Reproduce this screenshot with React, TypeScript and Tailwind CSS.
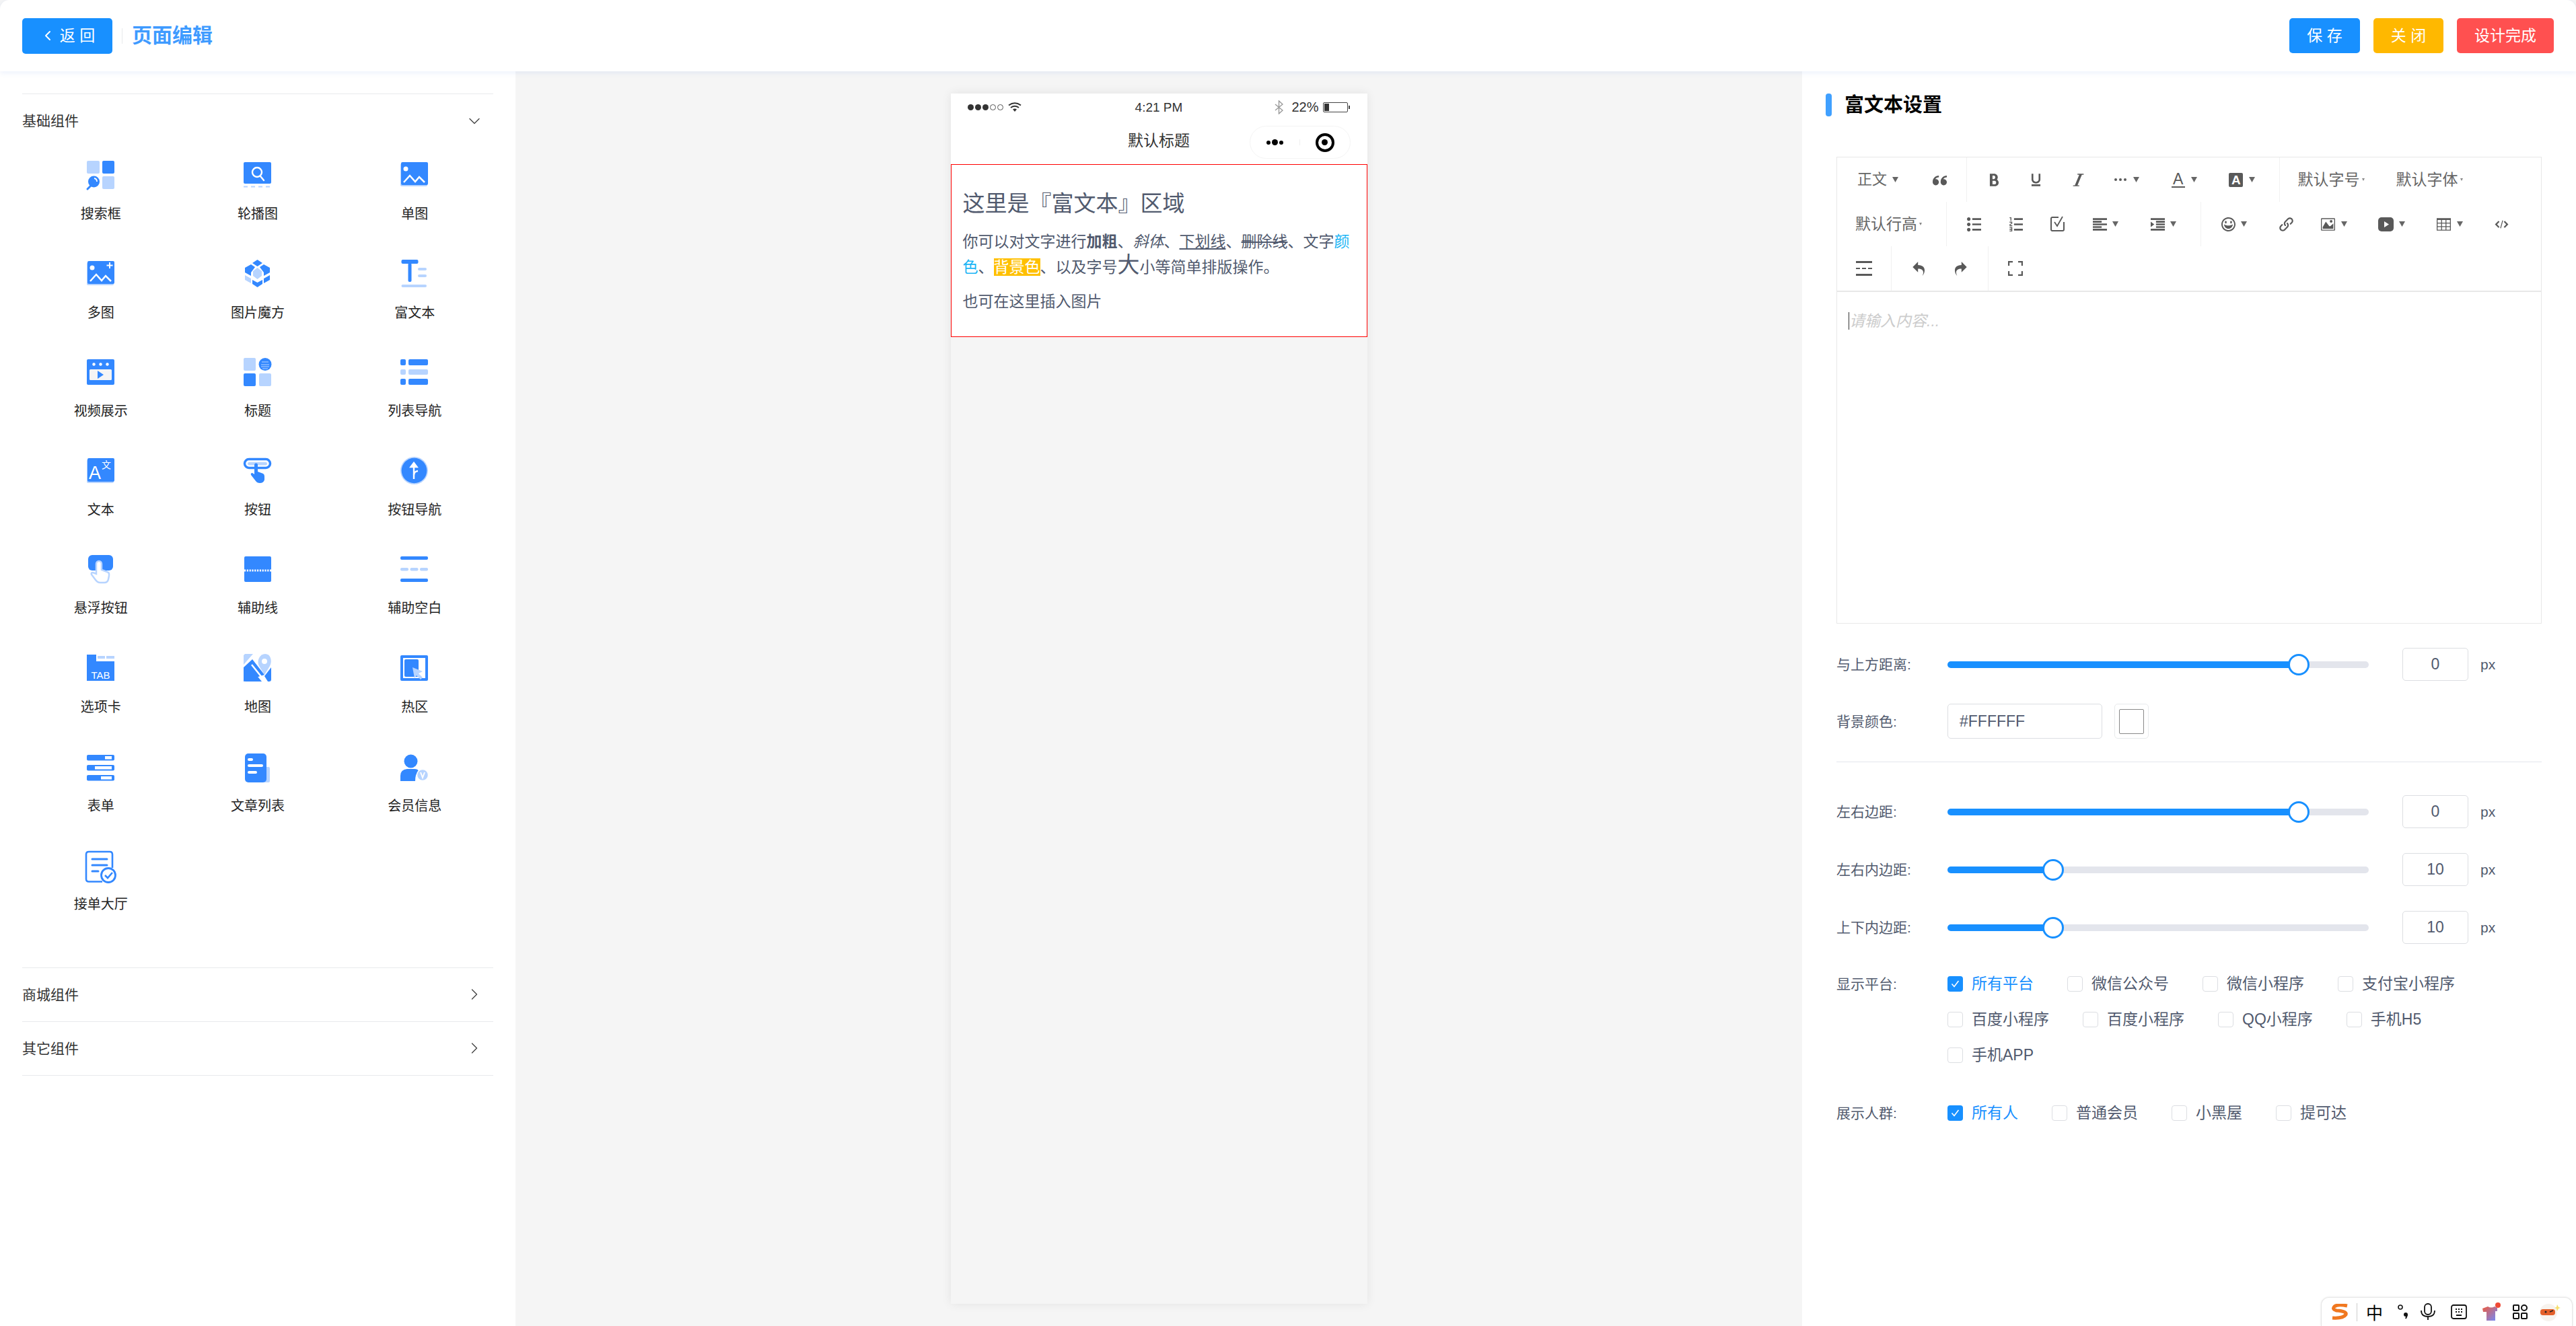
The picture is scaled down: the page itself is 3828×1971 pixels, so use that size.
import type { ReactNode } from "react";
import { ChevronDown, ChevronLeft, ChevronRight } from "lucide-react";
import {
  ImBold,
  ImEmbed2,
  ImHappy,
  ImImage,
  ImIndentIncrease,
  ImItalic,
  ImLink,
  ImList2,
  ImListNumbered,
  ImParagraphLeft,
  ImQuotesLeft,
  ImRedo2,
  ImTable2,
  ImUnderline,
  ImUndo2,
} from "react-icons/im";

const D = "#3388ff";
const L = "#b7d4ff";

function Ico({ children }: { children: ReactNode }) {
  return (
    <svg width="42" height="46" viewBox="0 0 42 46" className="overflow-visible">
      {children}
    </svg>
  );
}

const icons: { label: string; icon: ReactNode }[] = [
  {
    label: "搜索框",
    icon: (
      <Ico>
        <rect x="0" y="0" width="19" height="19" rx="2" fill={L} />
        <rect x="23" y="0" width="18" height="19" rx="2" fill={D} />
        <rect x="23" y="23" width="18" height="19" rx="2" fill={L} />
        <circle cx="10.5" cy="31" r="8.5" fill={D} />
        <path d="M6 37 L1 42" stroke={D} strokeWidth="3" strokeLinecap="round" />
        <path d="M11 26 a5 5 0 0 1 4 5" stroke="#fff" strokeWidth="1.8" fill="none" />
      </Ico>
    ),
  },
  {
    label: "轮播图",
    icon: (
      <Ico>
        <rect x="0" y="2" width="41" height="32" rx="2" fill={D} />
        <circle cx="20" cy="17" r="7" stroke="#fff" strokeWidth="2.4" fill="none" />
        <path d="M25 23 L30 29" stroke="#fff" strokeWidth="2.4" strokeLinecap="round" />
        <path d="M0 38.5 H41" stroke={L} strokeWidth="2" strokeDasharray="6 5" />
      </Ico>
    ),
  },
  {
    label: "单图",
    icon: (
      <Ico>
        <rect x="0" y="4" width="40" height="34" rx="2" fill={L} />
        <rect x="1" y="2" width="40" height="34" rx="2" fill={D} />
        <circle cx="8" cy="12" r="3.5" fill="#fff" />
        <path d="M5 32 L14 22 L22 31 L28 24 L36 32" stroke="#fff" strokeWidth="2.5" fill="none" />
      </Ico>
    ),
  },
  {
    label: "多图",
    icon: (
      <Ico>
        <rect x="0" y="4" width="40" height="34" rx="2" fill={L} />
        <rect x="1" y="2" width="40" height="34" rx="2" fill={D} />
        <circle cx="8" cy="12" r="3.5" fill="#fff" />
        <path d="M5 32 L14 22 L22 31 L28 24 L36 32" stroke="#fff" strokeWidth="2.5" fill="none" />
        <path d="M34 4 V13 M29.5 8.5 H38.5" stroke="#fff" strokeWidth="2" />
      </Ico>
    ),
  },
  {
    label: "图片魔方",
    icon: (
      <Ico>
        <path d="M20.5 0 L28 5 L20.5 10 L13 5 Z" fill={D} />
        <path d="M11 7 L17 11 L11 19 L11 24 L2 19 L2 12 Z" fill={D} />
        <path d="M30 7 L39 12 L39 19 L30 24 L30 19 L24 11 Z" fill={D} />
        <path d="M20.5 12 L27 17 L27 24 L20.5 29 L14 24 L14 17 Z" fill={L} />
        <path d="M2 23 L11 28 L11 35 L2 30 Z" fill={L} />
        <path d="M39 23 L30 28 L30 35 L39 30 Z" fill={D} />
        <path d="M13 30 L20.5 34 L28 30 L28 36 L20.5 41 L13 36 Z" fill={D} />
      </Ico>
    ),
  },
  {
    label: "富文本",
    icon: (
      <Ico>
        <rect x="1.5" y="0" width="25" height="6" rx="2" fill={D} />
        <rect x="11.5" y="5" width="5" height="28" rx="2" fill={D} />
        <rect x="26" y="12" width="13" height="4" rx="2" fill={L} />
        <rect x="26" y="22" width="13" height="4" rx="2" fill={L} />
        <rect x="1.5" y="37" width="37.5" height="4" rx="2" fill={L} />
      </Ico>
    ),
  },
  {
    label: "视频展示",
    icon: (
      <Ico>
        <rect x="0" y="2" width="41" height="38" rx="2" fill={D} />
        <circle cx="10.5" cy="9.5" r="2.2" fill="#fff" />
        <circle cx="20.5" cy="9.5" r="2.2" fill="#fff" />
        <circle cx="30.5" cy="9.5" r="2.2" fill="#fff" />
        <rect x="4" y="17" width="33" height="16" rx="1.5" fill="#f5f5f5" />
        <path d="M16 19 L25 25 L16 31 Z" fill={D} />
      </Ico>
    ),
  },
  {
    label: "标题",
    icon: (
      <Ico>
        <rect x="0" y="0" width="18" height="19" rx="2" fill={L} />
        <circle cx="32" cy="9.5" r="9.5" fill={D} />
        <path d="M27 6 H37 M26 10 H38 M26 13 H38 M28 16 H36" stroke={L} strokeWidth="1" />
        <rect x="0" y="23" width="18" height="19" rx="2" fill={D} />
        <rect x="23" y="23" width="18" height="19" rx="2" fill={L} />
      </Ico>
    ),
  },
  {
    label: "列表导航",
    icon: (
      <Ico>
        <rect x="0" y="2" width="8" height="9" rx="2" fill={D} />
        <rect x="12" y="2" width="29" height="9" rx="2" fill={D} />
        <rect x="0" y="17" width="8" height="8" rx="2" fill={L} />
        <rect x="12" y="17" width="29" height="8" rx="2" fill={L} />
        <rect x="0" y="31" width="8" height="9" rx="2" fill={D} />
        <rect x="12" y="31" width="29" height="9" rx="2" fill={D} />
      </Ico>
    ),
  },
  {
    label: "文本",
    icon: (
      <Ico>
        <rect x="0" y="4" width="40" height="35" rx="2" fill={L} />
        <rect x="1" y="2" width="40" height="35" rx="2" fill={D} />
        <text x="3" y="33" fontSize="27" fill="#fff" fontFamily="'Liberation Sans', sans-serif">A</text>
        <text x="22" y="17" fontSize="14" fill="#fff" fontFamily="'Noto Sans CJK SC', sans-serif">文</text>
      </Ico>
    ),
  },
  {
    label: "按钮",
    icon: (
      <Ico>
        <rect x="1.5" y="3.5" width="38" height="13" rx="6.5" fill="none" stroke={D} strokeWidth="3.5" />
        <rect x="6" y="8" width="29" height="4.5" rx="2.2" fill={L} />
        <path d="M16 12 a2.5 2.5 0 0 1 5 0 V22 L29 25 Q31 26 31 29 V34 Q30 39 24 39 Q20 39 18 36 L11 27 Q10 24 13 24 L16 26 Z" fill={D} />
      </Ico>
    ),
  },
  {
    label: "按钮导航",
    icon: (
      <Ico>
        <circle cx="20.5" cy="20.5" r="20.5" fill={L} />
        <circle cx="20.5" cy="20.5" r="18.8" fill={D} />
        <path d="M20 33 V11 M15.5 15 L20 9 L24.5 15 Z" stroke="#fff" strokeWidth="2.4" fill="#fff" />
        <path d="M20 27 Q20 22 26 21" stroke="#fff" strokeWidth="2.4" fill="none" />
      </Ico>
    ),
  },
  {
    label: "悬浮按钮",
    icon: (
      <Ico>
        <rect x="2" y="0" width="37" height="23" rx="6" fill={D} />
        <path d="M14 13 a4 4 0 0 1 8 0 V22 L30 25 Q34 26 33 31 L32 36 Q31 41 26 41 H20 Q16 41 13 37 L7 29 Q6 26 9 26 L14 28 Z" fill="#fff" stroke={L} strokeWidth="2.5" />
      </Ico>
    ),
  },
  {
    label: "辅助线",
    icon: (
      <Ico>
        <rect x="1" y="2" width="40" height="38" rx="2" fill={D} />
        <path d="M1 23 H41" stroke="#fff" strokeWidth="3" strokeDasharray="2.2 1.6" />
      </Ico>
    ),
  },
  {
    label: "辅助空白",
    icon: (
      <Ico>
        <rect x="0" y="2" width="41" height="5" rx="2" fill={D} />
        <rect x="0" y="19" width="12" height="4.5" rx="2" fill={L} />
        <rect x="14.5" y="19" width="12" height="4.5" rx="2" fill={L} />
        <rect x="29" y="19" width="12" height="4.5" rx="2" fill={L} />
        <rect x="0" y="35" width="41" height="5" rx="2" fill={D} />
      </Ico>
    ),
  },
  {
    label: "选项卡",
    icon: (
      <Ico>
        <path d="M0 1 H14 V11 H41 V40 H0 Z" fill={D} />
        <rect x="16" y="3" width="11" height="4" fill={L} />
        <rect x="29" y="3" width="12" height="4" fill={L} />
        <text x="20.5" y="37" fontSize="15" textAnchor="middle" fill="#fff" fontFamily="'Liberation Sans', sans-serif">TAB</text>
      </Ico>
    ),
  },
  {
    label: "地图",
    icon: (
      <Ico>
        <path d="M2 0 H14 L0 16 V2 Z" fill={L} />
        <path d="M0 20 L16 0 H18 Q16 10 22 18 L31 31 L41 18 V38 Q41 41 38 41 H37 L14 16 L0 30 Z" fill={D} opacity="0" />
        <path d="M0 20 L13 8 L31 31 L0 41 Z" fill={D} />
        <path d="M12 23 L27 41 H3 Q0 41 0 38 V32 Z" fill={D} />
        <path d="M12 16 L32 41" stroke="#fff" strokeWidth="2.5" />
        <path d="M31 31 L23 18 Q20 12 23 6 Q26 0 32 0 Q38 0 40 6 Q42 12 39 18 Z" fill={L} />
        <circle cx="31" cy="11" r="4" fill="#fff" />
        <path d="M31 33 L41 20 V38 Q41 41 38 41 H36 Z" fill={D} />
      </Ico>
    ),
  },
  {
    label: "热区",
    icon: (
      <Ico>
        <rect x="0" y="2" width="41" height="38" rx="2" fill={D} />
        <rect x="4" y="6" width="33" height="30" fill="#fff" />
        <rect x="6" y="8" width="21" height="26" rx="2" fill={D} />
        <path d="M18 20 L33 26 L27 29 L33 35 L30 38 L24 32 L21 36 Z" fill={L} />
      </Ico>
    ),
  },
  {
    label: "表单",
    icon: (
      <Ico>
        <rect x="0" y="3" width="41" height="8.5" rx="2" fill={D} />
        <rect x="27" y="5" width="10" height="4.5" fill="#fff" />
        <rect x="0" y="18" width="41" height="8.5" rx="2" fill={D} />
        <rect x="12" y="20" width="25" height="4.5" fill="#fff" />
        <rect x="0" y="33" width="41" height="8.5" rx="2" fill={D} />
        <rect x="21" y="35" width="16" height="4.5" fill="#fff" />
      </Ico>
    ),
  },
  {
    label: "文章列表",
    icon: (
      <Ico>
        <path d="M33 21 H37 Q39 21 39 23 V42 Q39 44 37 44 H30 Z" fill={L} />
        <rect x="2" y="1" width="32" height="43" rx="5" fill={D} />
        <rect x="6" y="8" width="8" height="4" rx="2" fill="#fff" />
        <rect x="6" y="17" width="23" height="4" rx="2" fill="#fff" />
        <rect x="6" y="27" width="14" height="4" rx="2" fill="#fff" />
      </Ico>
    ),
  },
  {
    label: "会员信息",
    icon: (
      <Ico>
        <ellipse cx="15.5" cy="12.5" rx="10" ry="10" fill={D} />
        <path d="M0 42 V34 Q0 25 10 24 H21 Q26 24 27 27 Q22 31 22 42 Z" fill={D} />
        <circle cx="33" cy="33" r="8.5" fill={L} stroke="#fff" strokeWidth="1.5" />
        <path d="M30 29 L33 37 L36 29" stroke="#fff" strokeWidth="2" fill="none" />
      </Ico>
    ),
  },
  {
    label: "接单大厅",
    icon: (
      <Ico>
        <path d="M23 45.5 H3 Q-1 45.5 -1 41.5 V5 Q-1 1 3 1 H34 Q38 1 38 5 V25" fill="none" stroke={D} strokeWidth="2.6" />
        <path d="M8 12 H30 M8 21 H30 M8 30 H17" stroke={D} strokeWidth="3" strokeLinecap="round" />
        <circle cx="32" cy="36" r="10.5" fill="#fff" stroke={D} strokeWidth="2.8" />
        <path d="M27 36 L31 40 L38 32" fill="none" stroke={D} strokeWidth="2.6" />
      </Ico>
    ),
  },
];

function Caret({ small }: { small?: boolean }) {
  return small ? (
    <svg width="4" height="4" viewBox="0 0 4 4" className="shrink-0">
      <path d="M0 0 H4 L2 4 Z" fill="#888" />
    </svg>
  ) : (
    <svg width="9" height="8" viewBox="0 0 9 8" className="shrink-0">
      <path d="M0 0 H9 L4.5 8 Z" fill="#666" />
    </svg>
  );
}

function Tool({ children, caret }: { children: ReactNode; caret?: boolean }) {
  return (
    <div className={caret ? "relative flex h-full w-[86px] items-center" : "flex h-full w-[62.4px] items-center justify-center"}>
      {caret ? (
        <>
          <div className="flex w-[62.4px] justify-center">{children}</div>
          <div className="absolute left-[50px]">
            <Caret />
          </div>
        </>
      ) : (
        children
      )}
    </div>
  );
}

function Select({ text, w, tiny }: { text: string; w: string; tiny?: boolean }) {
  return (
    <div className={`flex h-full items-center pl-[18px] text-[23px] leading-none text-[#666] ${w}`}>
      <span>{text}</span>
      <span className={tiny ? "ml-[3px]" : "ml-[9px]"}>
        <Caret small={tiny} />
      </span>
    </div>
  );
}

function Group({ children, last }: { children: ReactNode; last?: boolean }) {
  return <div className={`flex h-full px-[9px] ${last ? "" : "border-r border-[#f1f1f1]"}`}>{children}</div>;
}

const toolIcon = "text-[21px] text-[#595959]";

function Toolbar() {
  return (
    <div className="border-b-2 border-[#e8e8e8]">
      <div className="flex h-[66px]">
        <Group>
          <div className="flex h-full w-[112px] items-center pl-[21px] text-[22px] leading-none text-[#666]">
            <span>正文</span>
            <span className="ml-[8px]">
              <Caret />
            </span>
          </div>
          <Tool>
            <ImQuotesLeft className={toolIcon} />
          </Tool>
        </Group>
        <Group>
          <Tool>
            <ImBold className={toolIcon} />
          </Tool>
          <Tool>
            <ImUnderline className={toolIcon} />
          </Tool>
          <Tool>
            <ImItalic className={toolIcon} />
          </Tool>
          <Tool caret>
            <svg width="18" height="4" viewBox="0 0 18 4">
              <circle cx="2" cy="2" r="2" fill="#595959" />
              <circle cx="9" cy="2" r="2" fill="#595959" />
              <circle cx="16" cy="2" r="2" fill="#595959" />
            </svg>
          </Tool>
          <Tool caret>
            <div className="flex flex-col items-center">
              <span className="font-['Liberation_Sans',sans-serif] text-[23px] leading-[20px] text-[#595959]">A</span>
              <span className="mt-[1px] h-[2px] w-[20px] bg-[#595959]" />
            </div>
          </Tool>
          <Tool caret>
            <span className="flex h-[21px] w-[21px] items-center justify-center rounded-[2px] bg-[#595959] font-['Liberation_Sans',sans-serif] text-[19px] leading-none font-bold text-white">
              A
            </span>
          </Tool>
        </Group>
        <Group last>
          <Select text="默认字号" w="w-[146px]" tiny />
          <Select text="默认字体" w="w-[146px]" tiny />
        </Group>
      </div>
      <div className="flex h-[66px]">
        <Group>
          <Select text="默认行高" w="w-[144px]" tiny />
        </Group>
        <Group>
          <Tool>
            <ImList2 className={toolIcon} />
          </Tool>
          <Tool>
            <ImListNumbered className={toolIcon} />
          </Tool>
          <Tool>
            <svg width="24" height="24" viewBox="0 0 24 24" fill="none" stroke="#595959">
              <path d="M21 9 V20 Q21 22 19 22 H4 Q2 22 2 20 V4 Q2 2 4 2 H13" strokeWidth="2" />
              <path d="M7 9 L11 15 L19 1" strokeWidth="1.8" />
            </svg>
          </Tool>
          <Tool caret>
            <ImParagraphLeft className={toolIcon} />
          </Tool>
          <Tool caret>
            <ImIndentIncrease className={toolIcon} />
          </Tool>
        </Group>
        <Group last>
          <Tool caret>
            <ImHappy className={toolIcon} />
          </Tool>
          <Tool>
            <ImLink className={toolIcon} />
          </Tool>
          <Tool caret>
            <ImImage className={toolIcon} />
          </Tool>
          <Tool caret>
            <svg width="23" height="21" viewBox="0 0 23 21">
              <rect width="23" height="21" rx="5" fill="#595959" />
              <path d="M9 6 L16 10.5 L9 15 Z" fill="#fff" />
            </svg>
          </Tool>
          <Tool caret>
            <ImTable2 className={toolIcon} />
          </Tool>
          <Tool>
            <ImEmbed2 className={toolIcon} />
          </Tool>
        </Group>
      </div>
      <div className="flex h-[66px]">
        <Group>
          <Tool>
            <svg width="24" height="22" viewBox="0 0 24 22" fill="#595959">
              <rect y="0" width="24" height="3" />
              <rect y="19" width="24" height="3" />
              <rect y="10" width="6" height="2" />
              <rect x="9" y="10" width="6" height="2" />
              <rect x="18" y="10" width="6" height="2" />
            </svg>
          </Tool>
        </Group>
        <Group>
          <Tool>
            <ImUndo2 className={toolIcon} />
          </Tool>
          <Tool>
            <ImRedo2 className={toolIcon} />
          </Tool>
        </Group>
        <Group last>
          <Tool>
            <svg width="22" height="22" viewBox="0 0 22 22" fill="none" stroke="#595959" strokeWidth="2.4">
              <path d="M1 7 V1 H7 M15 1 H21 V7 M21 15 V21 H15 M7 21 H1 V15" />
            </svg>
          </Tool>
        </Group>
      </div>
    </div>
  );
}

function Slider({ label, pct, value }: { label: string; pct: number; value: string }) {
  return (
    <div className="flex h-[49px] items-center">
      <div className="w-[165px] text-[21px] leading-none text-[#515a6e]">{label}</div>
      <div className="relative h-[10px] w-[626px] rounded-[5px] bg-[#e3e5ec]">
        <div className="h-full rounded-[5px] bg-[#1890ff]" style={{ width: `${pct}%` }} />
        <div
          className="absolute top-1/2 h-[32px] w-[32px] -translate-x-1/2 -translate-y-1/2 rounded-full border-[3px] border-[#1890ff] bg-white"
          style={{ left: `${pct}%` }}
        />
      </div>
      <div className="ml-[50px] flex h-[49px] w-[98px] items-center justify-center rounded-[5px] border border-[#dcdee2] text-[23px] text-[#515a6e]">
        {value}
      </div>
      <div className="ml-[18px] text-[21px] leading-none text-[#515a6e]">px</div>
    </div>
  );
}

function Check({ text, on }: { text: string; on?: boolean }) {
  return (
    <div className="mr-[50px] flex items-center">
      {on ? (
        <span className="flex h-[23px] w-[23px] items-center justify-center rounded-[4px] bg-[#1890ff]">
          <svg width="13" height="11" viewBox="0 0 13 11" fill="none" stroke="#fff" strokeWidth="1.6">
            <path d="M1.5 5.5 L5 9.5 L11.5 1" />
          </svg>
        </span>
      ) : (
        <span className="h-[23px] w-[23px] rounded-[4px] border border-[#dcdee2] bg-white" />
      )}
      <span className={`ml-[13px] text-[23px] leading-none ${on ? "text-[#1890ff]" : "text-[#515a6e]"}`}>{text}</span>
    </div>
  );
}

function Section({ title, open }: { title: string; open?: boolean }) {
  return (
    <div className="flex h-[79px] items-center justify-between pr-[14px] text-[21px] leading-none text-[#333]">
      <span>{title}</span>
      {open ? (
        <ChevronDown size={28} strokeWidth={1.2} className="text-[#444]" />
      ) : (
        <ChevronRight size={28} strokeWidth={1.2} className="text-[#444]" />
      )}
    </div>
  );
}

function StatusBar() {
  return (
    <div className="flex h-[40px] items-center justify-between pr-[25px] pl-[25px] font-['Liberation_Sans',sans-serif] text-[#333]">
      <div className="flex w-[200px] items-center gap-[2px]">
        <span className="h-[9px] w-[9px] rounded-full bg-[#333]" />
        <span className="h-[9px] w-[9px] rounded-full bg-[#333]" />
        <span className="h-[9px] w-[9px] rounded-full bg-[#333]" />
        <span className="h-[9px] w-[9px] rounded-full border border-[#555]" />
        <span className="h-[9px] w-[9px] rounded-full border border-[#555]" />
        <svg width="20" height="14" viewBox="0 0 20 14" className="ml-[5px]" fill="none" stroke="#333" strokeWidth="2">
          <path d="M1 4.5 Q10 -2 19 4.5 M4 8 Q10 3.5 16 8" />
          <path d="M7 10.5 L10 14 L13 10.5 Q10 8.5 7 10.5 Z" fill="#333" stroke="none" />
        </svg>
      </div>
      <div className="text-[19px] leading-none">4:21 PM</div>
      <div className="flex w-[200px] items-center justify-end">
        <svg width="13" height="21" viewBox="0 0 13 21" fill="none" stroke="#999" strokeWidth="1.4">
          <path d="M1 6 L12 15 L6.5 20 V1 L12 6 L1 15" />
        </svg>
        <span className="ml-[12px] text-[20px] leading-none">22%</span>
        <div className="ml-[7px] flex items-center">
          <div className="h-[15px] w-[37px] rounded-[2px] border border-[#444] p-[1px]">
            <div className="h-full w-[7px] bg-[#333]" />
          </div>
          <div className="ml-[1px] h-[5px] w-[2px] bg-[#444]" />
        </div>
      </div>
    </div>
  );
}

function Phone() {
  return (
    <div className="mt-[33px] h-[1799px] w-[619px] bg-[#f5f5f5] shadow-[0_0_14px_rgba(0,0,0,0.08)]">
      <div className="bg-white">
        <StatusBar />
        <div className="grid h-[65px] grid-cols-[1fr_auto_1fr] items-center">
          <div />
          <div className="-mt-[4px] text-[23px] leading-none text-[#333]">默认标题</div>
          <div className="flex justify-end pr-[25px]">
            <div className="flex h-[49px] w-[150px] items-center rounded-[25px] border border-[#f4f4f4]">
              <div className="flex w-[75px] items-center justify-center gap-[2px] border-r border-[#f0f0f0]">
                <span className="h-[6px] w-[6px] rounded-full bg-black" />
                <span className="h-[9px] w-[9px] rounded-full bg-black" />
                <span className="h-[6px] w-[6px] rounded-full bg-black" />
              </div>
              <div className="flex w-[75px] justify-center">
                <div className="flex h-[28px] w-[28px] items-center justify-center rounded-full border-[4px] border-black">
                  <span className="h-[9px] w-[9px] rounded-full bg-black" />
                </div>
              </div>
            </div>
          </div>
        </div>
      </div>
      <div className="h-[257px] border border-[#ff0000] bg-white px-[17px] pt-[39px] text-[#515a6e]">
        <div className="text-[33px] leading-[38px]">这里是『富文本』区域</div>
        <div className="mt-[19px] text-[23px] leading-[36px]">
          你可以对文字进行<b>加粗</b>、<i>斜体</i>、<u>下划线</u>、<s>删除线</s>、文字
          <span className="text-[#1ab5f5]">颜色</span>、<span className="bg-[#ffc000] text-white">背景色</span>、以及字号
          <span className="text-[33px] leading-none">大</span>小等简单排版操作。
        </div>
        <div className="mt-[15px] text-[23px] leading-[36px]">也可在这里插入图片</div>
      </div>
    </div>
  );
}

function ImeBar() {
  return (
    <div className="absolute right-[5px] bottom-0 flex h-[43px] w-[374px] items-center rounded-t-[12px] border border-b-0 border-[#e6e6e6] bg-white pl-[12px] shadow-[0_0_3px_rgba(0,0,0,0.1)]">
      <svg width="28" height="24" viewBox="0 0 28 24" fill="none" stroke="#f07820" strokeWidth="5">
        <path d="M26 3 Q12 0 7 4 Q3 8 10 10 Q26 11 24 16 Q20 22 4 21" />
      </svg>
      <span className="ml-[12px] h-[27px] w-px bg-[#ccc]" />
      <span className="ml-[13px] font-['Noto_Sans_CJK_SC',sans-serif] text-[25px] leading-none text-black">中</span>
      <svg width="18" height="24" viewBox="0 0 18 24" className="ml-[21px]" fill="none">
        <circle cx="5" cy="5" r="3" stroke="#111" strokeWidth="1.6" />
        <circle cx="13" cy="16" r="3" fill="#111" />
        <path d="M15 17 L13 22" stroke="#111" strokeWidth="2" />
      </svg>
      <svg width="22" height="26" viewBox="0 0 22 26" className="ml-[17px]" fill="none" stroke="#111" strokeWidth="1.8">
        <rect x="6" y="1" width="10" height="16" rx="5" />
        <path d="M1 11 Q1 20 11 20 Q21 20 21 11 M11 20 V25" />
      </svg>
      <svg width="24" height="22" viewBox="0 0 24 22" className="ml-[23px]" fill="none" stroke="#111" strokeWidth="1.8">
        <rect x="1" y="1" width="22" height="20" rx="3" />
        <path d="M7 7 H9 M11 7 H13 M15 7 H17 M7 11 H9 M11 11 H13 M15 11 H17 M8 16 H16" />
      </svg>
      <svg width="30" height="28" viewBox="0 0 30 28" className="ml-[22px]">
        <defs>
          <linearGradient id="shirt" x1="0" y1="0" x2="1" y2="1">
            <stop offset="0" stopColor="#ee5a3c" />
            <stop offset="1" stopColor="#6f8bff" />
          </linearGradient>
        </defs>
        <path d="M1 9 L9 6 Q14 9 19 6 L23 8 V13 H20 V27 H7 V14 H2 Z" fill="url(#shirt)" />
        <circle cx="24" cy="4" r="4" fill="#f04a36" />
      </svg>
      <svg width="24" height="24" viewBox="0 0 24 24" className="ml-[15px]" fill="none" stroke="#111" strokeWidth="2">
        <rect x="2" y="2" width="8" height="8" rx="1" />
        <circle cx="18" cy="6" r="4" />
        <rect x="2" y="14" width="8" height="8" rx="1" />
        <rect x="14" y="14" width="8" height="8" rx="1" />
      </svg>
      <svg width="32" height="30" viewBox="0 0 32 30" className="ml-[16px]">
        <circle cx="14" cy="16" r="13" fill="#f7f3ee" />
        <rect x="2" y="11" width="22" height="9" rx="4" fill="#e4602a" />
        <circle cx="10" cy="15" r="1.5" fill="#222" />
        <path d="M16 15 L21 13" stroke="#222" strokeWidth="1.5" />
        <path d="M27 4 L29 8 L32 9 L29 10 L27 14 L26 10 L23 9 L26 8 Z" fill="#f6df6a" />
      </svg>
    </div>
  );
}

export default function App() {
  return (
    <div className="relative flex h-[1971px] flex-col overflow-hidden bg-[#f5f5f5] font-['Liberation_Sans','Noto_Sans_CJK_SC',sans-serif]">
      <header className="relative z-10 flex h-[106px] shrink-0 items-center justify-between rounded-t-[14px] bg-white px-[33px] shadow-[0_2px_8px_rgba(80,130,230,0.12)]">
        <div className="flex items-center">
          <button className="flex h-[53px] w-[134px] items-center justify-center rounded-[5px] bg-[#1890ff] text-[23px] leading-none text-white">
            <ChevronLeft size={24} strokeWidth={2} className="mr-[6px]" />
            返 回
          </button>
          <span className="ml-[14px] h-[23px] w-px bg-[#e8eaec]" />
          <span className="ml-[14px] text-[30px] leading-none font-bold text-[#3f9bff]">页面编辑</span>
        </div>
        <div className="flex items-center gap-[20px] text-[23px] leading-none text-white">
          <button className="h-[52px] w-[105px] rounded-[5px] bg-[#1890ff]">保 存</button>
          <button className="h-[52px] w-[104px] rounded-[5px] bg-[#ffb800]">关 闭</button>
          <button className="h-[52px] w-[144px] rounded-[5px] bg-[#ff5050]">设计完成</button>
        </div>
      </header>
      <div className="flex flex-1">
        <aside className="w-[766px] shrink-0 bg-white px-[33px] pt-[33px]">
          <div className="border-t border-[#e8eaec]">
            <Section title="基础组件" open />
            <div className="grid grid-cols-3 auto-rows-[146.6px] pb-[46px]">
              {icons.map((item) => (
                <div key={item.label} className="flex flex-col items-center pt-[20px]">
                  <div className="h-[46px]">{item.icon}</div>
                  <div className="mt-[18px] text-[20px] leading-[30px] text-[#222]">{item.label}</div>
                </div>
              ))}
            </div>
          </div>
          <div className="border-t border-[#e8eaec]">
            <Section title="商城组件" />
          </div>
          <div className="border-y border-[#e8eaec]">
            <Section title="其它组件" />
          </div>
        </aside>
        <main className="flex flex-1 justify-center">
          <Phone />
        </main>
        <aside className="w-[1150px] shrink-0 bg-white px-[51px] pt-[33px]">
          <div className="-ml-[16px] flex h-[34px] items-center">
            <span className="h-[34px] w-[9px] rounded-[4px] bg-[#40a0ff]" />
            <span className="ml-[19px] text-[29px] leading-none font-bold text-black">富文本设置</span>
          </div>
          <div className="mt-[60px] h-[694px] border border-[#e8e8e8]">
            <Toolbar />
            <div className="flex items-center pt-[30px] pl-[17px]">
              <span className="h-[26px] w-px bg-[#333]" />
              <span className="text-[23px] leading-none text-[#ccc] italic">请输入内容...</span>
            </div>
          </div>
          <div className="mt-[36px]">
            <Slider label="与上方距离:" pct={83.4} value="0" />
          </div>
          <div className="mt-[34px] flex h-[52px] items-center">
            <div className="w-[165px] text-[21px] leading-none text-[#515a6e]">背景颜色:</div>
            <div className="flex h-full w-[230px] items-center rounded-[5px] border border-[#dcdee2] pl-[17px] text-[23px] text-[#515a6e]">
              #FFFFFF
            </div>
            <div className="ml-[18px] flex h-full w-[51px] items-center justify-center rounded-[5px] border border-[#e8eaec]">
              <div className="h-[37px] w-[37px] rounded-[2px] border border-[#888] bg-white" />
            </div>
          </div>
          <div className="mt-[34px] h-px bg-[#e3e5ec]" />
          <div className="mt-[49px]">
            <Slider label="左右边距:" pct={83.4} value="0" />
          </div>
          <div className="mt-[37px]">
            <Slider label="左右内边距:" pct={25} value="10" />
          </div>
          <div className="mt-[37px]">
            <Slider label="上下内边距:" pct={25} value="10" />
          </div>
          <div className="mt-[33px] flex">
            <div className="flex h-[53px] w-[165px] items-center text-[21px] leading-none text-[#515a6e]">显示平台:</div>
            <div className="flex-1">
              <div className="flex h-[53px] items-center">
                <Check text="所有平台" on />
                <Check text="微信公众号" />
                <Check text="微信小程序" />
                <Check text="支付宝小程序" />
              </div>
              <div className="flex h-[53px] items-center">
                <Check text="百度小程序" />
                <Check text="百度小程序" />
                <Check text="QQ小程序" />
                <Check text="手机H5" />
              </div>
              <div className="flex h-[53px] items-center">
                <Check text="手机APP" />
              </div>
            </div>
          </div>
          <div className="mt-[33px] flex h-[53px] items-center">
            <div className="w-[165px] text-[21px] leading-none text-[#515a6e]">展示人群:</div>
            <Check text="所有人" on />
            <Check text="普通会员" />
            <Check text="小黑屋" />
            <Check text="提可达" />
          </div>
        </aside>
      </div>
      <ImeBar />
    </div>
  );
}
